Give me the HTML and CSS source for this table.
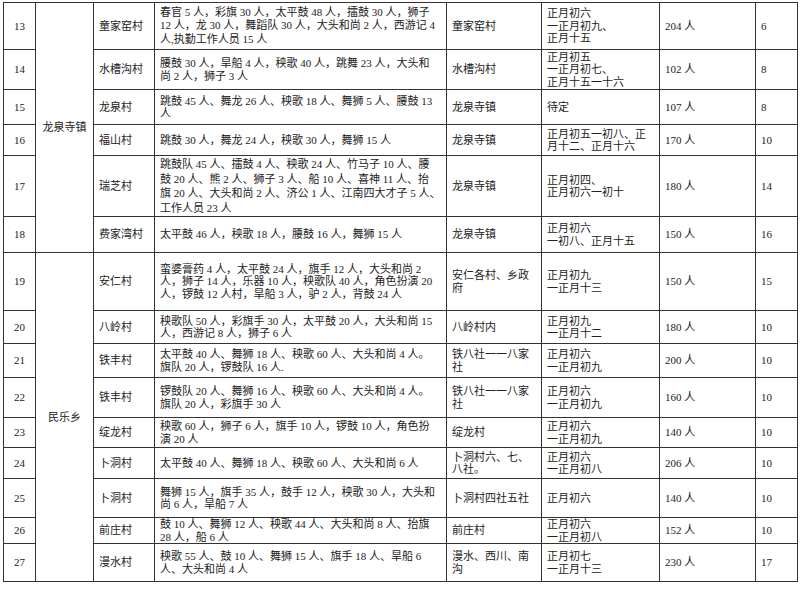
FILE: index.html
```html
<!DOCTYPE html>
<html lang="zh-CN">
<head>
<meta charset="utf-8">
<title>社火表演统计表</title>
<link rel="stylesheet" href="styles.css">
</head>
<body>
<table class="sheet">
  <colgroup>
    <col class="c-no"><col class="c-dist"><col class="c-vil"><col class="c-con"><col class="c-loc"><col class="c-time"><col class="c-ppl"><col class="c-cnt">
  </colgroup>
  <tbody>
    <tr class="h47">
      <td class="no">13</td>
      <td class="dist" rowspan="6">龙泉寺镇</td>
      <td>童家窑村</td>
      <td class="lh135">春官 5 人，彩旗 30 人，太平鼓 48 人，擂鼓 30 人，狮子<br>12 人，龙 30 人，舞蹈队 30 人，大头和尚 2 人，西游记 4<br>人,执勤工作人员 15 人</td>
      <td>童家窑村</td>
      <td>正月初六<br>一正月初九、<br>正月十五</td>
      <td>204 人</td>
      <td>6</td>
    </tr>
    <tr class="h40">
      <td class="no">14</td>
      <td>水槽沟村</td>
      <td>腰鼓 30 人，旱船 4 人，秧歌 40 人，跳舞 23 人，大头和<br>尚 2 人，狮子 3 人</td>
      <td>水槽沟村</td>
      <td>正月初五<br>一正月初七、<br>正月十五一十六</td>
      <td>102 人</td>
      <td>8</td>
    </tr>
    <tr class="h35">
      <td class="no">15</td>
      <td>龙泉村</td>
      <td>跳鼓 45 人、舞龙 26 人、秧歌 18 人、舞狮 5 人、腰鼓 13<br>人</td>
      <td>龙泉寺镇</td>
      <td>待定</td>
      <td>107 人</td>
      <td>8</td>
    </tr>
    <tr class="h31">
      <td class="no">16</td>
      <td>福山村</td>
      <td>跳鼓 30 人，舞龙 24 人，秧歌 30 人，舞狮 15 人</td>
      <td>龙泉寺镇</td>
      <td>正月初五一初八、正<br>月十二、正月十六</td>
      <td>170 人</td>
      <td>10</td>
    </tr>
    <tr class="h61">
      <td class="no">17</td>
      <td>瑞芝村</td>
      <td class="lh145">跳鼓队 45 人、擂鼓 4 人、秧歌 24 人、竹马子 10 人、腰<br>鼓 20 人、熊 2 人、狮子 3 人、船 10 人、喜神 11 人、抬<br>旗 20 人、大头和尚 2 人、济公 1 人、江南四大才子 5 人、<br>工作人员 23 人</td>
      <td>龙泉寺镇</td>
      <td>正月初四、<br>正月初六一初十</td>
      <td>180 人</td>
      <td>14</td>
    </tr>
    <tr class="h36">
      <td class="no">18</td>
      <td>费家湾村</td>
      <td>太平鼓 46 人，秧歌 18 人，腰鼓 16 人，舞狮 15 人</td>
      <td>龙泉寺镇</td>
      <td>正月初六<br>一初八、正月十五</td>
      <td>150 人</td>
      <td>16</td>
    </tr>
    <tr class="h58">
      <td class="no">19</td>
      <td class="dist" rowspan="9">民乐乡</td>
      <td>安仁村</td>
      <td>蛮婆膏药 4 人，太平鼓 24 人，旗手 12 人，大头和尚 2<br>人，狮子 14 人，乐器 10 人，秧歌队 40 人，角色扮演 20<br>人，锣鼓 12 人村，旱船 3 人，驴 2 人，背鼓 24 人</td>
      <td>安仁各村、乡政<br>府</td>
      <td>正月初九<br>一正月十三</td>
      <td>150 人</td>
      <td>15</td>
    </tr>
    <tr class="h33">
      <td class="no">20</td>
      <td>八岭村</td>
      <td>秧歌队 50 人，彩旗手 30 人，太平鼓 20 人，大头和尚 15<br>人，西游记 8 人，狮子 6 人</td>
      <td>八岭村内</td>
      <td>正月初九<br>一正月十二</td>
      <td>180 人</td>
      <td>10</td>
    </tr>
    <tr class="h34">
      <td class="no">21</td>
      <td>铁丰村</td>
      <td>太平鼓 40 人、舞狮 18 人、秧歌 60 人、大头和尚 4 人。<br>旗队 20 人，锣鼓队 16 人.</td>
      <td>铁八社一一八家<br>社</td>
      <td>正月初六<br>一正月初九</td>
      <td>200 人</td>
      <td>10</td>
    </tr>
    <tr class="h40">
      <td class="no">22</td>
      <td>铁丰村</td>
      <td>锣鼓队 20 人、舞狮 16 人、秧歌 60 人、大头和尚 4 人。<br>旗队 20 人，彩旗手 30 人</td>
      <td>铁八社一一八家<br>社</td>
      <td>正月初六<br>一正月初九</td>
      <td>160 人</td>
      <td>10</td>
    </tr>
    <tr class="h30">
      <td class="no">23</td>
      <td>绽龙村</td>
      <td>秧歌 60 人，狮子 6 人，旗手 10 人，锣鼓 10 人，角色扮<br>演 20 人</td>
      <td>绽龙村</td>
      <td>正月初六<br>一正月初九</td>
      <td>140 人</td>
      <td>10</td>
    </tr>
    <tr class="h31">
      <td class="no">24</td>
      <td>卜洞村</td>
      <td>太平鼓 40 人、舞狮 18 人、秧歌 60 人、大头和尚 6 人</td>
      <td>卜洞村六、七、<br>八社。</td>
      <td>正月初六<br>一正月初八</td>
      <td>206 人</td>
      <td>10</td>
    </tr>
    <tr class="h39">
      <td class="no">25</td>
      <td>卜洞村</td>
      <td>舞狮 15 人，旗手 35 人，鼓手 12 人，秧歌 30 人，大头和<br>尚 6 人，旱船 7 人</td>
      <td>卜洞村四社五社</td>
      <td>正月初六</td>
      <td>140 人</td>
      <td>10</td>
    </tr>
    <tr class="h26">
      <td class="no">26</td>
      <td>前庄村</td>
      <td>鼓 10 人、舞狮 12 人、秧歌 44 人、大头和尚 8 人、抬旗<br>28 人，船 6 人</td>
      <td>前庄村</td>
      <td>正月初六<br>一正月初八</td>
      <td>152 人</td>
      <td>10</td>
    </tr>
    <tr class="h38">
      <td class="no">27</td>
      <td>漫水村</td>
      <td>秧歌 55 人、鼓 10 人、舞狮 15 人、旗手 18 人、旱船 6<br>人、大头和尚 4 人</td>
      <td>漫水、西川、南<br>沟</td>
      <td>正月初七<br>一正月十三</td>
      <td>230 人</td>
      <td>17</td>
    </tr>
  </tbody>
</table>
</body>
</html>
```

FILE: styles.css
```css
html, body {
  background: #ffffff;
}
body {
  margin: 2px 0 0 3px;
  font-family: "Liberation Serif", "Noto Sans CJK SC", serif;
  font-size: 11px;
  color: #222222;
}
.sheet {
  border-collapse: collapse;
  table-layout: fixed;
  width: 795px;
}
.sheet td {
  border: 1px solid #333333;
  padding: 0 4px 0 5px;
  line-height: 12.5px;
  vertical-align: middle;
  text-align: left;
  white-space: nowrap;
  overflow: hidden;
}
.c-no { width: 32px; }
.c-dist { width: 58px; }
.c-vil { width: 61px; }
.c-con { width: 292px; }
.c-loc { width: 95px; }
.c-time { width: 118px; }
.c-ppl { width: 96px; }
.c-cnt { width: 42px; }

.sheet td.no,
.sheet td.dist {
  text-align: center;
  padding: 0;
}
.sheet td.lh135 { line-height: 13.5px; }
.sheet td.lh145 { line-height: 14.5px; }

.h26 { height: 26px; }
.h30 { height: 30px; }
.h31 { height: 31px; }
.h33 { height: 33px; }
.h34 { height: 34px; }
.h35 { height: 35px; }
.h36 { height: 36px; }
.h38 { height: 38px; }
.h39 { height: 39px; }
.h40 { height: 40px; }
.h47 { height: 47px; }
.h58 { height: 58px; }
.h61 { height: 61px; }
```
